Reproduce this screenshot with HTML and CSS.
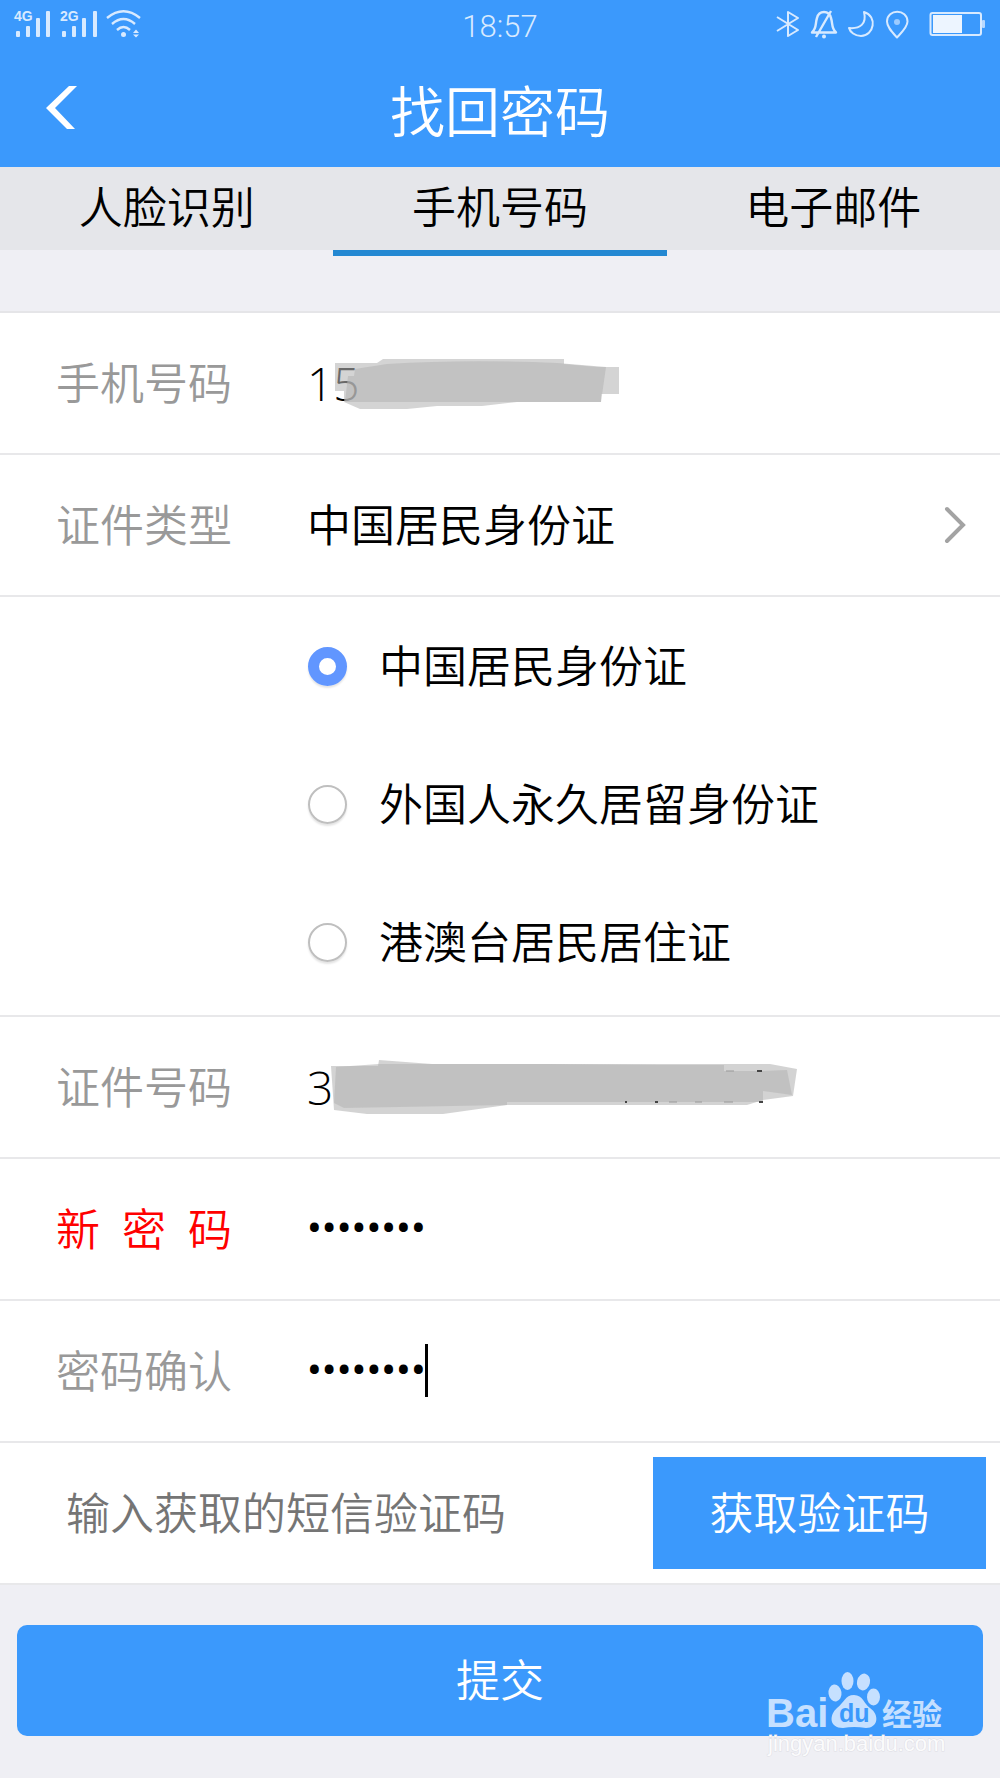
FILE: index.html
```html
<!DOCTYPE html>
<html lang="zh-CN">
<head>
<meta charset="utf-8">
<meta name="viewport" content="width=device-width, initial-scale=1">
<title>找回密码</title>
<link rel="stylesheet" href="styles.css">
</head>
<body>
<header class="top">
  <div class="status">
    <svg class="status-left" width="144" height="48" viewBox="0 1 144 48" aria-label="信号">
      <g fill="#d8eaff">
        <text x="14" y="22" class="net">4G</text>
        <text x="60" y="22" class="net">2G</text>
        <rect x="16" y="32" width="4" height="6" rx="1"/><rect x="26" y="27" width="4" height="11" rx="1"/><rect x="36" y="19" width="4" height="19" rx="1"/><rect x="46" y="12" width="4" height="26" rx="1"/>
        <rect x="62" y="32" width="4" height="6" rx="1"/><rect x="72" y="27" width="4" height="11" rx="1"/><rect x="82" y="19" width="4" height="19" rx="1"/><rect x="93" y="12" width="4" height="26" rx="1"/>
        <circle cx="123.500" cy="35.500" r="2.500"/>
        <path d="M133 34l3-3.500 3 3.500zM133 35.500l3 3 3-3z"/>
      </g>
      <g fill="none" stroke="#d8eaff" stroke-width="2.400">
        <path d="M107 19Q123.500 5.500 140 19M112 25Q123.500 15 135 25M117 31Q123.500 25 130 31"/>
      </g>
    </svg>
    <time class="clock">18:57</time>
    <svg class="status-right" width="224" height="48" viewBox="776 1 224 48" aria-label="设备状态">
      <g fill="none" stroke="#d8eaff" stroke-width="2" stroke-linejoin="round">
        <path d="M777 18L798 31L788 37V13L798 19L777 32"/>
        <path d="M812 33.500C817 29 815 25 817 19C819 11 829 11 831 19C833 25 831 29 836 33.500ZM816 38L831 12" stroke-width="2.400"/>
        <path d="M864 13C878 17 874 37 861 37C855 37 850 33 849 29C860 30 867 25 864 13Z"/>
        <path d="M897 38.500C892 33 887 28 887 22.500C887 9.500 907.500 9.500 907.500 22.500C907.500 28 902 33 897 38.500Z"/>
        <rect x="930.500" y="14" width="50.500" height="22" rx="2"/>
      </g>
      <circle cx="824" cy="37.500" r="2" fill="#d8eaff"/>
      <circle cx="897" cy="23" r="3" fill="#9ccbff"/>
      <rect x="933" y="16" width="29" height="18" fill="#edf5ff"/>
      <rect x="982" y="21" width="3" height="8" rx="1" fill="#b8d9ff"/>
    </svg>
  </div>
  <div class="bar">
    <button class="back" type="button" aria-label="返回">
      <svg width="31" height="44" viewBox="0 0 31 44"><path d="M23 0H31L9 22L29 43H21L0 22Z" fill="#fff"/></svg>
    </button>
    <h1 class="title">找回密码</h1>
  </div>
</header>

<nav class="tabs">
  <a class="tab" href="#face">人脸识别</a>
  <a class="tab tab-active" href="#phone" aria-current="page">手机号码</a>
  <a class="tab" href="#email">电子邮件</a>
</nav>

<form class="form">
  <div class="rows">
    <div class="row">
      <label class="label" for="phone">手机号码</label>
      <div class="field">
        <input class="input number" id="phone" type="text" value="15">
        <svg class="cover" width="320" height="60" viewBox="0 0 320 60" aria-hidden="true">
          <g fill="#b5b5b5">
            <path fill-opacity=".58" d="M28 10H70L76 6H257V11L290 14H312V41H294V49H210L175 53H130L100 56H53L37 49V38H28Z"/>
            <path fill-opacity=".6" d="M48 16L80 11Q160 6 250 10L299 14L294 49H38L41 23H47Z"/>
          </g>
        </svg>
      </div>
    </div>
    <div class="row">
      <label class="label" for="idtype">证件类型</label>
      <button class="picker" id="idtype" type="button" aria-expanded="true">
        <span class="text">中国居民身份证</span>
        <svg width="24" height="38" viewBox="0 0 24 38"><path d="M4 3L20 19L4 35" fill="none" stroke="#a3a3a3" stroke-width="4" stroke-linecap="round"/></svg>
      </button>
    </div>
    <div class="options" role="radiogroup" aria-labelledby="idtype">
      <label class="option"><input class="radio" type="radio" name="idkind" checked><span class="text">中国居民身份证</span></label>
      <label class="option"><input class="radio" type="radio" name="idkind"><span class="text">外国人永久居留身份证</span></label>
      <label class="option"><input class="radio" type="radio" name="idkind"><span class="text">港澳台居民居住证</span></label>
    </div>
    <div class="row">
      <label class="label" for="idno">证件号码</label>
      <div class="field">
        <input class="input number" id="idno" type="text" value="3">
        <svg class="cover" width="500" height="60" viewBox="0 0 500 60" aria-hidden="true">
          <g fill="#b5b5b5">
            <path fill-opacity=".6" d="M24 9H71L72 3L125 7H463L490 12L486 39L456 43L440 48H200L136 57H60L27 53Z"/>
            <path fill-opacity=".6" d="M29 10L72 7H240L350 8H417V14H455L480 13L485 38L456 34V45H200V48L37 51L27 46Z"/>
          </g>
          <path d="M419 14h8M362 45h8M388 45h7M417 45h9" stroke="#999" stroke-width="1"/>
          <path d="M450 14h5M452 45h4M348 45h3M318 45h2" stroke="#444" stroke-width="2"/>
        </svg>
      </div>
    </div>
    <div class="row">
      <label class="label label-error" for="pwd">新 密 码</label>
      <div class="field"><input class="input" id="pwd" type="password" value="aaaaaaaa"></div>
    </div>
    <div class="row">
      <label class="label" for="pwd2">密码确认</label>
      <div class="field"><input class="input" id="pwd2" type="password" value="aaaaaaaa"><span class="caret"></span></div>
    </div>
    <div class="row row-code">
      <input class="input code" type="text" placeholder="输入获取的短信验证码" aria-label="短信验证码">
      <button class="get-code" type="button">获取验证码</button>
    </div>
  </div>
  <button class="submit" type="submit">提交</button>
</form>

<svg class="watermark" width="190" height="94" viewBox="0 0 190 94" aria-label="Baidu 经验">
  <g fill="#c6e0ff">
    <text x="3" y="59" class="wm-bai">Bai</text>
    <ellipse cx="72" cy="25" rx="6.500" ry="8.500" transform="rotate(-8 72 25)"/>
    <ellipse cx="84.500" cy="13" rx="6" ry="9"/>
    <ellipse cx="100.500" cy="14" rx="6.500" ry="8.500" transform="rotate(12 100.500 14)"/>
    <ellipse cx="110.500" cy="29" rx="6.500" ry="8.500"/>
    <path d="M91 27C100 27 101 36 107 40C117 47 115 60 103 60Q91 58 80 60C66 60 66 47 74 40C81 35 82 27 91 27Z"/>
    <text x="119" y="57" class="wm-exp">经验</text>
  </g>
  <text x="76" y="54" class="wm-du">du</text>
  <text x="5" y="83" class="wm-url">jingyan.baidu.com</text>
</svg>
</body>
</html>
```

FILE: styles.css
```css
* { box-sizing: border-box; }

body {
  margin: 0;
  position: relative;
  background: #efeff4;
  color: #000;
  font-family: "Noto Sans CJK SC DemiLight", "Noto Sans CJK SC", sans-serif;
  font-size: 44px;
  font-weight: 350;
  line-height: 64px;
}

button, input {
  margin: 0;
  padding: 0;
  border: 0;
  background: none;
  color: inherit;
  font: inherit;
}

svg { display: block; }

.top { background: #3b99fc; color: #fff; }

.status {
  display: grid;
  grid-template-columns: 1fr auto 1fr;
  align-items: center;
  height: 48px;
}
.status-right { justify-self: end; }
.clock {
  padding-top: 6px;
  color: #d8eaff;
  font-family: Roboto, sans-serif;
  font-size: 31px;
  font-weight: 300;
  line-height: 42px;
}
.net { font: bold 14px "Liberation Sans", sans-serif; }

.bar {
  display: grid;
  grid-template-columns: 120px 1fr 120px;
  align-items: center;
  height: 119px;
}
.back { padding-left: 46px; }
.title {
  margin: 0;
  font-size: 55px;
  font-weight: inherit;
  text-align: center;
}

.tabs { display: flex; background: #e5e6ea; }
.tab {
  position: relative;
  flex: 1;
  padding: 6px 0 13px;
  color: #000;
  text-align: center;
  text-decoration: none;
}
.tab-active::after {
  content: "";
  position: absolute;
  top: 100%;
  left: 0;
  right: 0;
  height: 6px;
  background: #2488d2;
}

.form { padding: 61px 0 42px; }
.rows { border-top: 2px solid #e5e5e8; background: #fff; }

.row {
  display: flex;
  align-items: center;
  height: 142px;
  padding-left: 56px;
  border-bottom: 2px solid #e8e8ea;
}
.label {
  width: 176px;
  margin-right: 75px;
  padding-bottom: 5px;
  color: #999;
  text-align-last: justify;
}
.text { padding-bottom: 5px; }
.label-error { color: #f00; }

.field { position: relative; flex: 1; }
.input {
  display: block;
  width: 100%;
  height: 64px;
  outline: 0;
}
.input[type="password"] { font-family: Roboto, sans-serif; font-weight: 400; }
.number {
  font-family: "Open Sans", sans-serif;
  font-size: 46px;
  font-weight: 300;
}
.cover { position: absolute; top: 2px; left: 0; }

.caret {
  position: absolute;
  top: 5px;
  left: 118px;
  width: 3px;
  height: 53px;
  background: #000;
}

.picker {
  display: flex;
  flex: 1;
  align-items: center;
  justify-content: space-between;
  padding-right: 33px;
}

.options {
  padding: 0 0 4px 308px;
  border-bottom: 2px solid #e8e8ea;
}
.option {
  display: flex;
  align-items: center;
  gap: 32px;
  height: 138px;
}
.radio {
  appearance: none;
  width: 39px;
  height: 39px;
  border: 2px solid #bfbfbf;
  border-radius: 50%;
  box-shadow: 0 2px 2px #e4e4e4;
}
.radio:checked { border: 11px solid #6196ff; }

.row-code { padding: 0 14px 0 0; }
.code { flex: 1; width: 0; padding: 0 0 5px 66px; }
.code::placeholder { color: #757575; opacity: 1; }
.get-code {
  width: 333px;
  height: 112px;
  padding-bottom: 5px;
  background: #3b99fc;
  color: #fff;
}

.submit {
  display: block;
  width: calc(100% - 34px);
  height: 111px;
  margin: 40px 17px 0;
  padding-bottom: 5px;
  border-radius: 10px;
  background: #3b99fc;
  color: #fff;
}

.watermark {
  position: absolute;
  right: 47px;
  bottom: 16px;
  pointer-events: none;
}
.wm-bai { font: bold 40px "Liberation Sans", sans-serif; }
.wm-du { font: bold 25px "Liberation Sans", sans-serif; fill: #3b99fc; }
.wm-exp { font: bold 30px "Noto Sans CJK SC", sans-serif; }
.wm-url {
  font: 22px "Liberation Sans", sans-serif;
  fill: #fbfbfc;
  stroke: #dedee4;
  stroke-width: 1px;
  paint-order: stroke;
}
```
